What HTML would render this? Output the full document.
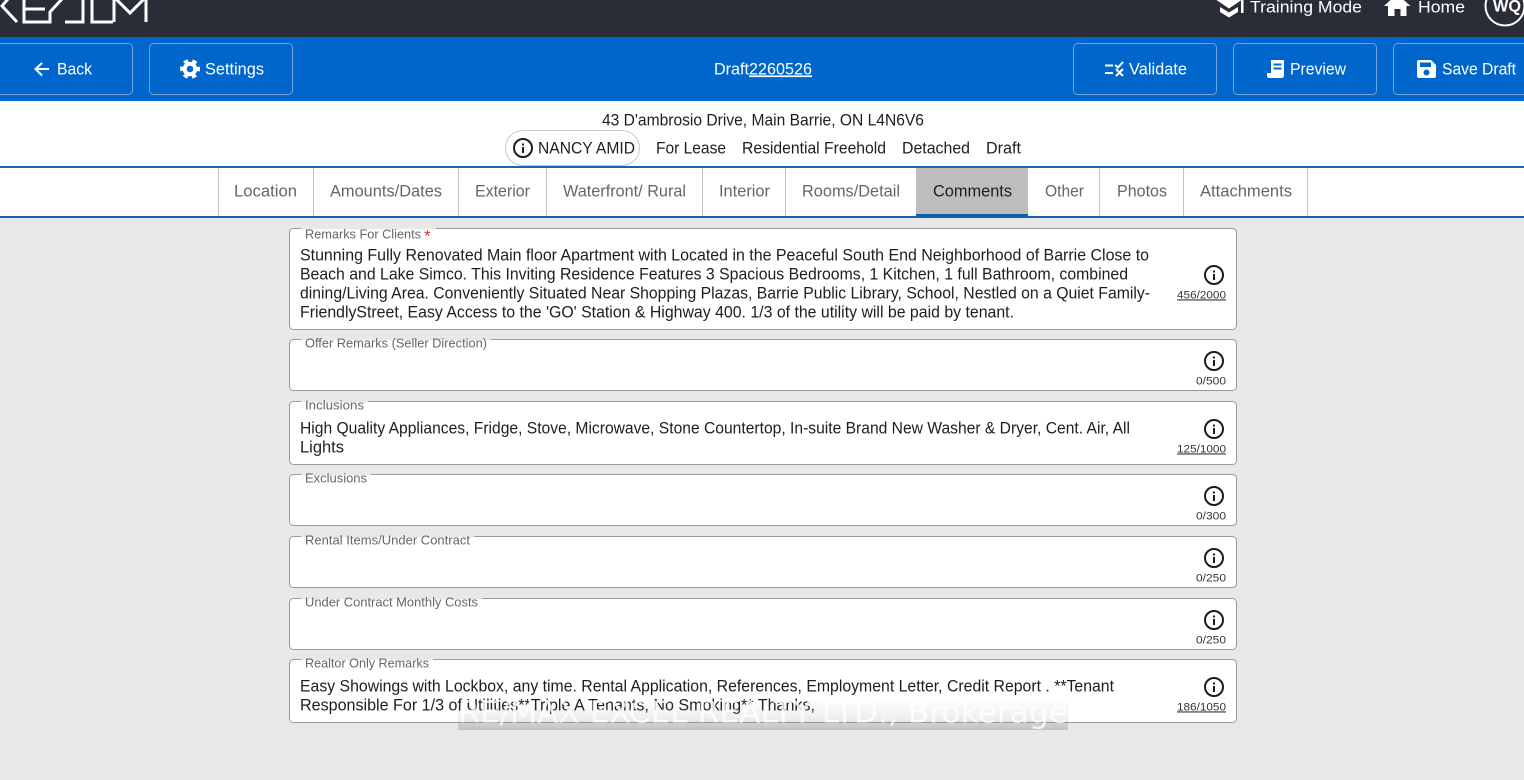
<!DOCTYPE html>
<html lang="en"><head><meta charset="utf-8"><title>Draft 2260526</title>
<style>
html,body{margin:0;padding:0;width:1524px;height:780px;overflow:hidden;background:#e8e8e8}
svg{display:block;position:absolute;left:0;top:0}
text{font-family:"Liberation Sans",sans-serif;white-space:pre;transform:translateY(-.6px)}
.w{fill:#fff;font-size:17px}
.d{fill:#1e1e1e;font-size:16.500px}
.t{fill:#666;font-size:16.500px}
.l{fill:#666;font-size:13px}
.c{fill:#333;font-size:11px}
.b{fill:none;stroke:#fff;stroke-opacity:.42}
.f{fill:#fff;stroke:#9a9a9a}
.g{stroke:#e8e8e8;stroke-width:1.4}
.s{stroke:#c4c4c4}
.i{fill:none;stroke:#1c1c1c;stroke-width:2}
.id{fill:#1c1c1c}
</style></head><body>
<svg width="1524" height="780" viewBox="0 0 1524 780" xmlns="http://www.w3.org/2000/svg">
<defs>
<g id="inf"><circle class="i" cx="0" cy="0" r="9"/><rect class="id" x="-1" y="-1" width="2" height="6"/><rect class="id" x="-1" y="-4.500" width="2" height="2"/></g>
<linearGradient id="wm" x1="0" y1="0" x2="0" y2="1"><stop offset="0" stop-color="#888" stop-opacity="0"/><stop offset=".55" stop-color="#999" stop-opacity=".14"/><stop offset="1" stop-color="#777" stop-opacity=".34"/></linearGradient>
</defs>
<rect width="1524" height="780" fill="#e8e8e8"/>
<rect width="1524" height="37" fill="#2a2d38"/>
<rect y="37" width="1524" height="64" fill="#0066cc"/>
<rect y="101" width="1524" height="65" fill="#fff"/>
<rect y="168" width="1524" height="48" fill="#fff"/>
<rect y="166" width="1524" height="2" fill="#1565b5"/>
<rect y="216" width="1524" height="2" fill="#1565b5"/>

<!-- logo -->
<g fill="none" stroke="#fff" stroke-width="3">
<path d="M8-1 2 6 17 22"/>
<path d="M24-1V22H50V12L62-1"/>
<path d="M25 9H45"/>
<path d="M65 22H83V-1"/>
<path d="M92-1V22H113"/>
<path d="M114 22V-3L130 13 146-3V22"/>
</g>

<!-- top right -->
<path fill="#fff" d="M1215-1 1229-7 1243-1 1229 8.500ZM1220 7 1229 12.500 1238 7V12L1229 17.500 1220 12ZM1241 0h2.500V13h-2.500Z"/>
<text class="w" x="1250" y="13" textLength="112" lengthAdjust="spacingAndGlyphs">Training Mode</text>
<path fill="#fff" d="M1384 6 1397-6 1410.500 6H1406.500V16H1400.500V9H1394.500V16H1388V6Z"/>
<text class="w" x="1418" y="13" textLength="47" lengthAdjust="spacingAndGlyphs">Home</text>
<circle cx="1505" cy="6" r="19.500" fill="none" stroke="#fff" stroke-width="2"/>
<text class="w" x="1493" y="12" style="font-weight:700" textLength="28" lengthAdjust="spacingAndGlyphs">WQ</text>

<!-- toolbar buttons -->
<rect class="b" x="-10.500" y="43.500" width="143" height="51" rx="4"/>
<rect class="b" x="149.500" y="43.500" width="143" height="51" rx="4"/>
<rect class="b" x="1073.500" y="43.500" width="143" height="51" rx="4"/>
<rect class="b" x="1233.500" y="43.500" width="143" height="51" rx="4"/>
<rect class="b" x="1393.500" y="43.500" width="143" height="51" rx="4"/>

<path fill="none" stroke="#fff" stroke-width="2" d="M49 69H36M42 63 35.500 69 42 75.500"/>
<text class="w" x="57" y="75" textLength="35" lengthAdjust="spacingAndGlyphs">Back</text>

<circle cx="190" cy="69" r="5.300" fill="none" stroke="#fff" stroke-width="4"/>
<circle cx="190" cy="69" r="8.500" fill="none" stroke="#fff" stroke-width="3" stroke-dasharray="4.500 4.400" transform="rotate(-15 190 69)"/>
<text class="w" x="205" y="75" textLength="59" lengthAdjust="spacingAndGlyphs">Settings</text>

<text class="w" x="714" y="75" textLength="35" lengthAdjust="spacingAndGlyphs">Draft</text>
<text class="w" x="749" y="75" textLength="63" lengthAdjust="spacingAndGlyphs" text-decoration="underline">2260526</text>

<path fill="none" stroke="#fff" stroke-width="2" d="M1105 65.500H1113M1105 73H1113M1115 65 1118 67.500 1123 62M1116 69 1123 76M1123 69 1116 76"/>
<text class="w" x="1129" y="75" textLength="58" lengthAdjust="spacingAndGlyphs">Validate</text>

<path fill="#fff" fill-rule="evenodd" d="M1271 60H1284V75Q1284 78 1281 78H1269Q1267 78 1267 75.500V73H1271ZM1273.500 63.500V65.500H1281.500V63.500ZM1273.500 67.500V69.500H1281.500V67.500Z"/>
<text class="w" x="1290" y="75" textLength="56" lengthAdjust="spacingAndGlyphs">Preview</text>

<path fill="#fff" fill-rule="evenodd" d="M1419 60H1431L1436 65V76A2 2 0 0 1 1434 78H1419A2 2 0 0 1 1417 76V62A2 2 0 0 1 1419 60ZM1420 62.500V67H1431V62.500ZM1426.500 69.500A3 3 0 1 0 1426.501 75.500 3 3 0 0 0 1426.500 69.500Z"/>
<text class="w" x="1442" y="75" textLength="74" lengthAdjust="spacingAndGlyphs">Save Draft</text>

<!-- header info -->
<text class="d" x="602" y="126" textLength="322" lengthAdjust="spacingAndGlyphs">43 D'ambrosio Drive, Main Barrie, ON L4N6V6</text>
<rect x="505.500" y="130.500" width="134" height="35" rx="17.500" fill="#fff" stroke="#c8c8c8"/>
<use href="#inf" x="523" y="148"/>
<text class="d" x="538" y="154" textLength="97" lengthAdjust="spacingAndGlyphs">NANCY AMID</text>
<text class="d" x="656" y="154" textLength="70" lengthAdjust="spacingAndGlyphs">For Lease</text>
<text class="d" x="742" y="154" textLength="144" lengthAdjust="spacingAndGlyphs">Residential Freehold</text>
<text class="d" x="902" y="154" textLength="68" lengthAdjust="spacingAndGlyphs">Detached</text>
<text class="d" x="986" y="154" textLength="35" lengthAdjust="spacingAndGlyphs">Draft</text>

<!-- tabs -->
<rect x="916" y="168" width="112" height="48" fill="#bdbdbd"/>
<path class="s" d="M218.500 168V216M313.500 168V216M458.500 168V216M546.500 168V216M702.500 168V216M785.500 168V216M1099.500 168V216M1183.500 168V216M1307.500 168V216"/>
<rect x="916" y="214" width="112" height="3" fill="#0f5cab"/>
<text class="t" x="234" y="197" textLength="63" lengthAdjust="spacingAndGlyphs">Location</text>
<text class="t" x="330" y="197" textLength="112" lengthAdjust="spacingAndGlyphs">Amounts/Dates</text>
<text class="t" x="475" y="197" textLength="55" lengthAdjust="spacingAndGlyphs">Exterior</text>
<text class="t" x="563" y="197" textLength="123" lengthAdjust="spacingAndGlyphs">Waterfront/ Rural</text>
<text class="t" x="719" y="197" textLength="51" lengthAdjust="spacingAndGlyphs">Interior</text>
<text class="t" x="802" y="197" textLength="98" lengthAdjust="spacingAndGlyphs">Rooms/Detail</text>
<text class="d" x="933" y="197" textLength="79" lengthAdjust="spacingAndGlyphs">Comments</text>
<text class="t" x="1045" y="197" textLength="39" lengthAdjust="spacingAndGlyphs">Other</text>
<text class="t" x="1117" y="197" textLength="50" lengthAdjust="spacingAndGlyphs">Photos</text>
<text class="t" x="1200" y="197" textLength="92" lengthAdjust="spacingAndGlyphs">Attachments</text>

<!-- field 1 -->
<rect class="f" x="289.500" y="228.500" width="947" height="101" rx="4"/>
<path class="g" d="M301 228.500H436"/>
<text class="l" x="305" y="239" textLength="116" lengthAdjust="spacingAndGlyphs">Remarks For Clients</text>
<text x="424" y="242" style="fill:#d9363e;font-size:17px">*</text>
<text class="d" x="300" y="261" textLength="849" lengthAdjust="spacingAndGlyphs">Stunning Fully Renovated Main floor Apartment with Located in the Peaceful South End Neighborhood of Barrie Close to</text>
<text class="d" x="300" y="280" textLength="828" lengthAdjust="spacingAndGlyphs">Beach and Lake Simco. This Inviting Residence Features 3 Spacious Bedrooms, 1 Kitchen, 1 full Bathroom, combined</text>
<text class="d" x="300" y="299" textLength="850" lengthAdjust="spacingAndGlyphs">dining/Living Area. Conveniently Situated Near Shopping Plazas, Barrie Public Library, School, Nestled on a Quiet Family-</text>
<text class="d" x="300" y="318" textLength="714" lengthAdjust="spacingAndGlyphs">FriendlyStreet, Easy Access to the 'GO' Station &amp; Highway 400. 1/3 of the utility will be paid by tenant.</text>
<use href="#inf" x="1214" y="275"/>
<text class="c" x="1177" y="299" textLength="49" lengthAdjust="spacingAndGlyphs" text-decoration="underline">456/2000</text>

<!-- field 2 -->
<rect class="f" x="289.500" y="339.500" width="947" height="51" rx="4"/>
<path class="g" d="M301 339.500H491"/>
<text class="l" x="305" y="348" textLength="182" lengthAdjust="spacingAndGlyphs">Offer Remarks (Seller Direction)</text>
<use href="#inf" x="1214" y="361"/>
<text class="c" x="1196" y="385" textLength="30" lengthAdjust="spacingAndGlyphs">0/500</text>

<!-- field 3 -->
<rect class="f" x="289.500" y="401.500" width="947" height="63" rx="4"/>
<path class="g" d="M301 401.500H368"/>
<text class="l" x="305" y="410" textLength="59" lengthAdjust="spacingAndGlyphs">Inclusions</text>
<text class="d" x="300" y="434" textLength="830" lengthAdjust="spacingAndGlyphs">High Quality Appliances, Fridge, Stove, Microwave, Stone Countertop, In-suite Brand New Washer &amp; Dryer, Cent. Air, All</text>
<text class="d" x="300" y="453" textLength="44" lengthAdjust="spacingAndGlyphs">Lights</text>
<use href="#inf" x="1214" y="429"/>
<text class="c" x="1177" y="453" textLength="49" lengthAdjust="spacingAndGlyphs" text-decoration="underline">125/1000</text>

<!-- field 4 -->
<rect class="f" x="289.500" y="474.500" width="947" height="51" rx="4"/>
<path class="g" d="M301 474.500H371"/>
<text class="l" x="305" y="483" textLength="62" lengthAdjust="spacingAndGlyphs">Exclusions</text>
<use href="#inf" x="1214" y="496"/>
<text class="c" x="1196" y="520" textLength="30" lengthAdjust="spacingAndGlyphs">0/300</text>

<!-- field 5 -->
<rect class="f" x="289.500" y="536.500" width="947" height="51" rx="4"/>
<path class="g" d="M301 536.500H474"/>
<text class="l" x="305" y="545" textLength="165" lengthAdjust="spacingAndGlyphs">Rental Items/Under Contract</text>
<use href="#inf" x="1214" y="558"/>
<text class="c" x="1196" y="582" textLength="30" lengthAdjust="spacingAndGlyphs">0/250</text>

<!-- field 6 -->
<rect class="f" x="289.500" y="598.500" width="947" height="51" rx="4"/>
<path class="g" d="M301 598.500H482"/>
<text class="l" x="305" y="607" textLength="173" lengthAdjust="spacingAndGlyphs">Under Contract Monthly Costs</text>
<use href="#inf" x="1214" y="620"/>
<text class="c" x="1196" y="644" textLength="30" lengthAdjust="spacingAndGlyphs">0/250</text>

<!-- field 7 -->
<rect class="f" x="289.500" y="659.500" width="947" height="63" rx="4"/>
<path class="g" d="M301 659.500H433"/>
<text class="l" x="305" y="668" textLength="124" lengthAdjust="spacingAndGlyphs">Realtor Only Remarks</text>
<text class="d" x="300" y="692" textLength="814" lengthAdjust="spacingAndGlyphs">Easy Showings with Lockbox, any time. Rental Application, References, Employment Letter, Credit Report . **Tenant</text>
<text class="d" x="300" y="711" textLength="515" lengthAdjust="spacingAndGlyphs">Responsible For 1/3 of Utilities**Triple A Tenants, No Smoking** Thanks,</text>
<use href="#inf" x="1214" y="687"/>
<text class="c" x="1177" y="711" textLength="49" lengthAdjust="spacingAndGlyphs" text-decoration="underline">186/1050</text>

<!-- watermark -->
<rect x="458" y="700" width="610" height="30" fill="url(#wm)"/>
<text x="458" y="723" textLength="610" lengthAdjust="spacingAndGlyphs" style="font-family:'DejaVu Sans',sans-serif;font-size:30px;fill:#fff;fill-opacity:.8">RE/MAX EXCEL REALTY LTD., Brokerage</text>
</svg>
</body></html>
